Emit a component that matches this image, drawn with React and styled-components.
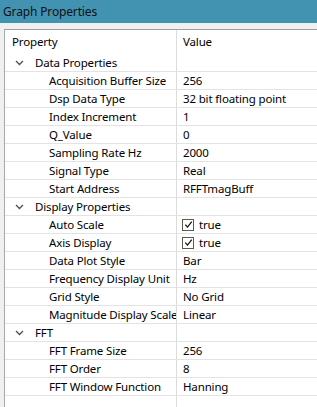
import React from 'react'
import styled, { createGlobalStyle } from 'styled-components'

const GlobalStyle = createGlobalStyle`
  html, body {
    margin: 0;
    padding: 0;
    background: #f0f0f0;
  }
  body {
    font-family: "Noto Sans", "Open Sans", "Liberation Sans", sans-serif;
    font-size: 11.5px;
    letter-spacing: -0.15px;
    color: #000;
  }
`

const groups = [
  {
    name: 'Data Properties',
    items: [
      ['Acquisition Buffer Size', '256'],
      ['Dsp Data Type', '32 bit floating point'],
      ['Index Increment', '1'],
      ['Q_Value', '0'],
      ['Sampling Rate Hz', '2000'],
      ['Signal Type', 'Real'],
      ['Start Address', 'RFFTmagBuff'],
    ],
  },
  {
    name: 'Display Properties',
    items: [
      ['Auto Scale', true],
      ['Axis Display', true],
      ['Data Plot Style', 'Bar'],
      ['Frequency Display Unit', 'Hz'],
      ['Grid Style', 'No Grid'],
      ['Magnitude Display Scale', 'Linear'],
    ],
  },
  {
    name: 'FFT',
    items: [
      ['FFT Frame Size', '256'],
      ['FFT Order', '8'],
      ['FFT Window Function', 'Hanning'],
    ],
  },
]

const Chevron = () => (
  <svg width="9" height="6" viewBox="0 0 9 6">
    <path d="M1 1 L4.5 4.5 L8 1" fill="none" stroke="#4d4d4d" strokeWidth="1.3" />
  </svg>
)

const Check = () => (
  <CheckBox>
    <svg width="9" height="9" viewBox="0 0 9 9">
      <path d="M1.3 4.6 L3.5 7 L7.8 1.6" fill="none" stroke="#111" strokeWidth="1.2" />
    </svg>
  </CheckBox>
)

const App = () => {
  return (
    <Window>
      <GlobalStyle />
      <TitleBar>Graph Properties</TitleBar>
      <Strip />
      <Panel>
        <HeaderRow>
          <NameCell $pad={7}>Property</NameCell>
          <ValueCell>Value</ValueCell>
        </HeaderRow>
        {groups.map(g => (
          <React.Fragment key={g.name}>
            <Row>
              <NameCell $pad={10}>
                <Toggle><Chevron /></Toggle>
                {g.name}
              </NameCell>
              <ValueCell />
            </Row>
            {g.items.map(([label, value]) => (
              <Row key={label}>
                <NameCell $pad={44}>{label}</NameCell>
                <ValueCell>
                  {value === true ? (
                    <>
                      <Check />
                      true
                    </>
                  ) : value}
                </ValueCell>
              </Row>
            ))}
          </React.Fragment>
        ))}
        <Filler>
          <NameCell />
          <ValueCell />
        </Filler>
      </Panel>
    </Window>
  )
}

export default App

const Window = styled.div`
width: 317px;
height: 407px;
display: flex;
flex-direction: column;
overflow: hidden;
`
const TitleBar = styled.div`
height: 23px;
background: #4293b2;
color: #111;
font-size: 12px;
display: flex;
align-items: center;
padding-left: 3px;
flex-shrink: 0;
`
const Strip = styled.div`
height: 6px;
background: #f0f0f0;
flex-shrink: 0;
`
const Panel = styled.div`
flex: 1;
margin-left: 4px;
border-top: 1px solid #a0a0a0;
border-left: 1px solid #a9a9a9;
background: #fff;
display: flex;
flex-direction: column;
`
const Row = styled.div`
display: flex;
height: 17px;
border-bottom: 1px solid #e3e3e3;
line-height: 17px;
white-space: nowrap;
`
const HeaderRow = styled(Row)`
height: 24px;
line-height: 24px;
border-bottom: none;
`
const Filler = styled(Row)`
flex: 1;
border-bottom: none;
`
const NameCell = styled.div`
width: 172px;
flex-shrink: 0;
box-sizing: border-box;
padding-left: ${p => p.$pad || 0}px;
border-right: 1px solid #dcdcdc;
overflow: hidden;
display: flex;
align-items: center;
`
const ValueCell = styled.div`
flex: 1;
padding-left: 6px;
display: flex;
align-items: center;
overflow: hidden;
`
const Toggle = styled.span`
width: 20px;
display: inline-flex;
align-items: center;
`
const CheckBox = styled.span`
width: 12px;
height: 12px;
box-sizing: border-box;
border: 1px solid #5c5c4c;
background: #fff;
display: inline-flex;
align-items: center;
justify-content: center;
margin-left: -1px;
margin-right: 5px;
`
